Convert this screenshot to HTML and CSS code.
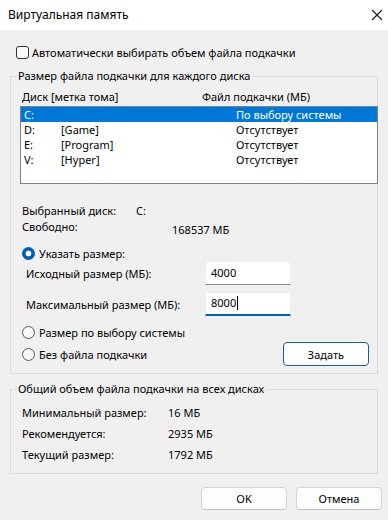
FILE: index.html
```html
<!DOCTYPE html>
<html>
  <head>
    <title>Виртуальная память</title>
    <link rel="stylesheet" href="styles.css">
  </head>
  <body>
    <div class="window">
      <div class="titlebar">
        <span class="title">Виртуальная память</span>
        <svg class="close" width="12" height="12" viewBox="0 0 12 12">
          <path d="M1 1 L11 11 M11 1 L1 11" stroke="#1a1a1a" stroke-width="1.1" fill="none"/>
        </svg>
      </div>

      <div class="content">
        <label class="check-row">
          <span class="checkbox"></span>
          Автоматически выбирать объем файла подкачки
        </label>

        <fieldset class="group group-drives">
          <legend>Размер файла подкачки для каждого диска</legend>
          <div class="group-body">
            <div class="list-head">
              <span class="col-disk">Диск [метка тома]</span>
              <span class="col-file">Файл подкачки (МБ)</span>
            </div>
            <div class="listbox">
              <div class="row selected"><span class="c-drive">C:</span><span class="c-label"></span><span class="c-file">По выбору системы</span></div>
              <div class="row"><span class="c-drive">D:</span><span class="c-label">[Game]</span><span class="c-file">Отсутствует</span></div>
              <div class="row"><span class="c-drive">E:</span><span class="c-label">[Program]</span><span class="c-file">Отсутствует</span></div>
              <div class="row"><span class="c-drive">V:</span><span class="c-label">[Hyper]</span><span class="c-file">Отсутствует</span></div>
            </div>

            <div class="info">
              <div class="info-row"><span class="info-key">Выбранный диск:</span><span class="info-drive">C:</span></div>
              <div class="info-row"><span class="info-key">Свободно:</span><span class="info-free">168537 МБ</span></div>
            </div>

            <label class="radio-row first">
              <span class="radio checked"></span>
              Указать размер:
            </label>
            <div class="field-row">
              <span class="field-label">Исходный размер (МБ):</span>
              <span class="textbox">4000</span>
            </div>
            <div class="field-row second">
              <span class="field-label">Максимальный размер (МБ):</span>
              <span class="textbox focused">8000<span class="caret"></span></span>
            </div>

            <label class="radio-row">
              <span class="radio"></span>
              Размер по выбору системы
            </label>
            <div class="last-row">
              <label class="radio-row inline">
                <span class="radio"></span>
                Без файла подкачки
              </label>
              <button class="btn default">Задать</button>
            </div>
          </div>
        </fieldset>

        <fieldset class="group group-total">
          <legend>Общий объем файла подкачки на всех дисках</legend>
          <div class="group-body totals">
            <div class="total-row"><span class="total-key">Минимальный размер:</span><span>16 МБ</span></div>
            <div class="total-row"><span class="total-key">Рекомендуется:</span><span>2935 МБ</span></div>
            <div class="total-row"><span class="total-key">Текущий размер:</span><span>1792 МБ</span></div>
          </div>
        </fieldset>

        <div class="actions">
          <button class="btn">OK</button>
          <button class="btn">Отмена</button>
        </div>
      </div>
    </div>
  </body>
</html>
```

FILE: styles.css
```css
html, body {
  margin: 0;
  padding: 0;
}
body {
  font-family: "Noto Sans", "Liberation Sans", sans-serif;
  font-size: 11px;
  color: #000;
  background: #f0f0f0;
}
.window {
  width: 388px;
  height: 520px;
  background: #f0f0f0;
  overflow: hidden;
}
.titlebar {
  height: 30px;
  background: #fff;
  display: flex;
  align-items: center;
  justify-content: space-between;
  padding: 0 5px 0 8px;
  box-sizing: border-box;
}
.title {
  font-size: 12px;
  line-height: 16px;
}
.close {
  display: block;
}

.check-row {
  display: flex;
  align-items: center;
  height: 18px;
  margin: 13px 0 0 16px;
  gap: 3px;
}
.checkbox {
  width: 11px;
  height: 11px;
  border: 1px solid #333;
  border-radius: 3px;
  background: #f7f7f7;
}

.group {
  margin: 8px 10px 0 10px;
  padding: 0;
  border: 1px solid #dcdcdc;
  min-width: 0;
}
.group legend {
  margin-left: 5px;
  padding: 0 2px;
  line-height: 14px;
}
.group-body {
  padding: 0 0 7px 11px;
}

.list-head {
  display: flex;
  margin-top: 6px;
  line-height: 16px;
}
.col-disk {
  width: 180px;
}
.listbox {
  margin: 1px -1px 0 -2px;
  height: 76px;
  border: 1px solid #828282;
  background: #fff;
}
.row {
  display: flex;
  height: 15px;
  line-height: 15px;
  padding-left: 3px;
}
.row.selected {
  background: #0078d7;
  color: #fff;
}
.c-drive {
  width: 37px;
}
.c-label {
  width: 175px;
}

.info {
  margin-top: 19px;
}
.info-row {
  display: flex;
  line-height: 16px;
}
.info-key {
  width: 114px;
}
.info-free {
  margin-left: 36px;
  padding-top: 4px;
  line-height: 14px;
}

.radio-row {
  display: flex;
  align-items: center;
  gap: 4px;
  height: 16px;
  margin-top: 8px;
}
.radio-row.inline {
  margin-top: 0;
}
.radio {
  width: 11px;
  height: 11px;
  border: 1px solid #595959;
  border-radius: 50%;
  background: #f7f7f7;
  box-sizing: content-box;
}
.radio.checked {
  width: 13px;
  height: 13px;
  border: none;
  background: radial-gradient(circle, #fff 0 2.6px, #005fb8 3.2px);
}

.field-row {
  display: flex;
  align-items: center;
  padding-left: 4px;
}
.field-row.second {
  margin-top: 7px;
}
.field-label {
  width: 179px;
}
.textbox {
  display: flex;
  align-items: center;
  width: 86px;
  height: 24px;
  box-sizing: border-box;
  padding: 0 0 2px 5px;
  background: #fff;
  border: 1px solid #ececec;
  border-bottom: 1px solid #8a8a8a;
  border-radius: 3px 3px 0 0;
}
.textbox.focused {
  border-bottom: 2px solid #005fb8;
}
.caret {
  display: inline-block;
  width: 1px;
  height: 14px;
  background: #000;
  margin-left: 1px;
}

.last-row {
  display: flex;
  align-items: center;
  justify-content: space-between;
  margin-top: 2px;
  padding-right: 8px;
  height: 24px;
}

.btn {
  font: inherit;
  color: #000;
  width: 86px;
  height: 24px;
  background: #fdfdfd;
  border: 1px solid #d4d4d4;
  border-bottom-color: #c2c2c2;
  border-radius: 4px;
  padding: 0;
}
.btn.default {
  border: 1px solid #1f5f99;
}

.group-total {
  margin-top: 8px;
}
.totals {
  padding-top: 6px;
  padding-bottom: 8px;
}
.total-row {
  display: flex;
  height: 21px;
  line-height: 21px;
}
.total-key {
  width: 146px;
}

.actions {
  display: flex;
  justify-content: flex-end;
  gap: 9px;
  margin: 13px 6px 0 0;
}
.actions .btn {
  height: 23px;
}
```
